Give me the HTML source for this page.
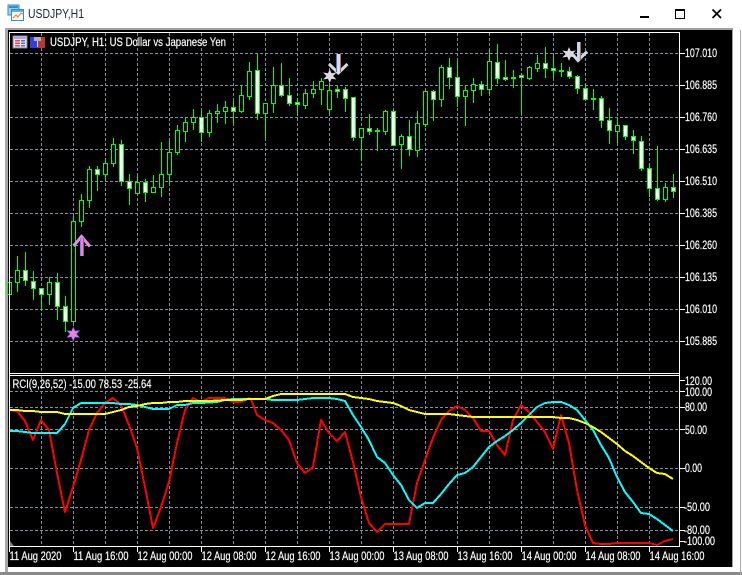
<!DOCTYPE html>
<html><head><meta charset="utf-8"><title>USDJPY,H1</title>
<style>
html,body{margin:0;padding:0;background:#fff;width:742px;height:575px;overflow:hidden}
svg{display:block;font-family:"Liberation Sans",sans-serif}
text{fill:#fff;font-size:11.5px;stroke:#fff;stroke-width:.18px}
</style></head><body>
<svg width="742" height="575" viewBox="0 0 742 575" xmlns="http://www.w3.org/2000/svg">
<rect width="742" height="575" fill="#fff"/>
<!-- title bar -->
<g shape-rendering="crispEdges">
<rect x="8" y="5" width="11" height="10" fill="#9fd0f0" stroke="#2b8fd8"/>
<rect x="9" y="6" width="9" height="2" fill="#2b8fd8"/>
<rect x="11.5" y="9.5" width="12" height="11" fill="#fff" stroke="#2b8fd8"/>
<rect x="12" y="10" width="11" height="2" fill="#58aee8"/>
</g>
<path d="M13 18l3-3 2 2 3-4 2 1" fill="none" stroke="#f08020" stroke-width="1.2"/>
<text x="28" y="18" textLength="56" lengthAdjust="spacingAndGlyphs" style="fill:#1c2438;stroke:none;font-size:13px">USDJPY,H1</text>
<g shape-rendering="crispEdges">
<rect x="640" y="16" width="9" height="2" fill="#000"/>
<rect x="675.5" y="9.5" width="9" height="9" fill="none" stroke="#000"/>
<rect x="675" y="9" width="10" height="2" fill="#000"/>
</g>
<path d="M712.5 9.5l8.5 8.5M721 9.5l-8.5 8.5" stroke="#000" stroke-width="1.7" fill="none"/>
<!-- frame -->
<g shape-rendering="crispEdges">
<rect x="5" y="28" width="728" height="2" fill="#a0a0a0"/>
<rect x="5" y="28" width="3" height="544" fill="#a8a8a8"/>
<rect x="732" y="28" width="1" height="539" fill="#a0a0a0"/>
<rect x="0" y="572" width="742" height="3" fill="#8a8a8a"/>
<rect x="740" y="30" width="1" height="545" fill="#a8a8a8"/>
<rect x="8" y="30" width="724" height="537" fill="#000"/>
</g>
<!-- grid -->
<g stroke="#8090a0" stroke-width="1" stroke-dasharray="3 2" fill="none" shape-rendering="crispEdges">
<path d="M10 53.5H679M10 85.5H679M10 117.5H679M10 149.5H679M10 181.5H679M10 213.5H679M10 245.5H679M10 277.5H679M10 309.5H679M10 341.5H679"/>
<path d="M10 391.5H679M10 407.5H679M10 429.5H679M10 468.5H679M10 507.5H679M10 530.5H679"/>
<path d="M41.5 33V373M73.5 33V373M105.5 33V373M137.5 33V373M169.5 33V373M201.5 33V373M233.5 33V373M265.5 33V373M297.5 33V373M329.5 33V373M361.5 33V373M393.5 33V373M425.5 33V373M457.5 33V373M489.5 33V373M521.5 33V373M553.5 33V373M585.5 33V373M617.5 33V373M649.5 33V373"/>
<path d="M41.5 376V546M73.5 376V546M105.5 376V546M137.5 376V546M169.5 376V546M201.5 376V546M233.5 376V546M265.5 376V546M297.5 376V546M329.5 376V546M361.5 376V546M393.5 376V546M425.5 376V546M457.5 376V546M489.5 376V546M521.5 376V546M553.5 376V546M585.5 376V546M617.5 376V546M649.5 376V546"/>
</g>
<!-- candles -->
<g shape-rendering="crispEdges" stroke="#00ff00" stroke-width="1">
<path fill="none" d="M9.5 278V300M17.5 256V292M25.5 252V286M33.5 271V300M41.5 288V310M49.5 277V305M57.5 273V320M65.5 296V332M73.5 216V323M81.5 194V227M89.5 166V208M97.5 166V191M105.5 158V180M113.5 138V167M121.5 140V186M129.5 174V205M137.5 176V194M145.5 179V202M153.5 175V193M161.5 142V197M169.5 140V184M177.5 125V155M185.5 117V142M193.5 109V130M201.5 111V142M209.5 110V137M217.5 104V123M225.5 101V124M233.5 101V124M241.5 85V113M249.5 62V100M257.5 53V120M265.5 103V139M273.5 67V113M281.5 63V97M289.5 78V106M297.5 98V115M305.5 89V109M313.5 81V98M321.5 78V105M329.5 85V113M337.5 86V98M345.5 87V112M353.5 97V141M361.5 128V161M369.5 114V135M377.5 128V151M385.5 110V135M393.5 110V145M401.5 134V169M409.5 120V156M417.5 111V157M425.5 91V127M433.5 90V121M441.5 65V107M449.5 58V89M457.5 61V107M465.5 85V126M473.5 78V103M481.5 81V96M489.5 50V94M497.5 44V84M505.5 60V81M513.5 70V88M521.5 74V114M529.5 66V80M537.5 55V72M545.5 47V78M553.5 56V78M561.5 63V77M569.5 67V79M577.5 75V94M585.5 84V101M593.5 89V110M601.5 96V128M609.5 108V144M617.5 118V143M625.5 125V140M633.5 130V154M641.5 136V171M649.5 164V197M657.5 146V201M665.5 183V202M673.5 174V198"/>
<path fill="#000" d="M7.5 282.5h4V294.5h-4zM15.5 270.5h4V282.5h-4zM47.5 282.5h4V294.5h-4zM71.5 221.5h4V321.5h-4zM79.5 200.5h4V221.5h-4zM87.5 169.5h4V200.5h-4zM103.5 163.5h4V174.5h-4zM111.5 144.5h4V163.5h-4zM135.5 182.5h4V193.5h-4zM151.5 187.5h4V192.5h-4zM159.5 174.5h4V187.5h-4zM167.5 152.5h4V174.5h-4zM175.5 130.5h4V152.5h-4zM183.5 122.5h4V131.5h-4zM191.5 117.5h4V122.5h-4zM207.5 113.5h4V132.5h-4zM215.5 111.5h4V113.5h-4zM223.5 107.5h4V111.5h-4zM239.5 95.5h4V111.5h-4zM247.5 71.5h4V96.5h-4zM263.5 103.5h4V113.5h-4zM271.5 85.5h4V103.5h-4zM303.5 93.5h4V105.5h-4zM311.5 89.5h4V93.5h-4zM319.5 81.5h4V89.5h-4zM327.5 90.5h4V109.5h-4zM359.5 128.5h4V137.5h-4zM383.5 111.5h4V131.5h-4zM399.5 136.5h4V144.5h-4zM415.5 123.5h4V150.5h-4zM423.5 91.5h4V124.5h-4zM439.5 67.5h4V99.5h-4zM463.5 90.5h4V96.5h-4zM471.5 84.5h4V90.5h-4zM487.5 61.5h4V89.5h-4zM527.5 67.5h4V78.5h-4zM535.5 63.5h4V68.5h-4zM615.5 125.5h4V131.5h-4zM663.5 187.5h4V199.5h-4z"/>
<path fill="#fff" d="M23.5 270.5h4V280.5h-4zM31.5 281.5h4V288.5h-4zM39.5 288.5h4V294.5h-4zM55.5 282.5h4V306.5h-4zM63.5 306.5h4V321.5h-4zM95.5 169.5h4V174.5h-4zM119.5 144.5h4V181.5h-4zM127.5 181.5h4V188.5h-4zM143.5 182.5h4V192.5h-4zM199.5 117.5h4V132.5h-4zM231.5 107.5h4V111.5h-4zM255.5 70.5h4V113.5h-4zM279.5 85.5h4V95.5h-4zM287.5 95.5h4V103.5h-4zM295.5 102.5h4V104.5h-4zM335.5 89.5h4V91.5h-4zM343.5 89.5h4V98.5h-4zM351.5 97.5h4V137.5h-4zM367.5 128.5h4V131.5h-4zM375.5 130.5h4V131.5h-4zM391.5 111.5h4V145.5h-4zM407.5 136.5h4V149.5h-4zM431.5 91.5h4V99.5h-4zM447.5 67.5h4V77.5h-4zM455.5 77.5h4V96.5h-4zM479.5 84.5h4V89.5h-4zM495.5 62.5h4V78.5h-4zM503.5 77.5h4V79.5h-4zM511.5 77.5h4V78.5h-4zM519.5 75.5h4V77.5h-4zM543.5 63.5h4V68.5h-4zM551.5 68.5h4V70.5h-4zM559.5 70.5h4V71.5h-4zM567.5 71.5h4V76.5h-4zM575.5 76.5h4V88.5h-4zM583.5 88.5h4V99.5h-4zM591.5 98.5h4V99.5h-4zM599.5 98.5h4V120.5h-4zM607.5 120.5h4V130.5h-4zM623.5 125.5h4V136.5h-4zM631.5 136.5h4V140.5h-4zM639.5 141.5h4V168.5h-4zM647.5 168.5h4V188.5h-4zM655.5 188.5h4V199.5h-4zM671.5 187.5h4V191.5h-4z"/>
</g>
<!-- arrows and stars -->
<polygon points="73.3,327 75,331 79.5,330.5 76.5,334 79.5,337.5 75,337 73.3,341 71.5,337 67,337.5 70,334 67,330.5 71.5,331" fill="#f080e0" stroke="#6050e0" stroke-width=".6"/>
<path d="M73.5 246L81.5 236.5 90 246.5" fill="none" stroke="#e88ae8" stroke-width="3"/>
<rect x="80" y="237" width="3" height="19" fill="#d888f8"/>
<rect x="83" y="238" width="1" height="18" fill="#a85a3a"/>
<rect x="80" y="238" width="1" height="18" fill="#9a6cff"/>
<polygon points="329.7,69 331.5,73.3 336.5,72.5 333,76 336.5,79.5 331.5,78.7 329.7,83 328,78.7 323,79.5 326.5,76 323,72.5 328,73.3" fill="#dcdce0"/>
<path d="M329 64L338.3 73 347.5 64" fill="none" stroke="#d8d8e4" stroke-width="3"/>
<rect x="337" y="54" width="3" height="19" fill="#dcdce8"/>
<rect x="340" y="54" width="1" height="18" fill="#b07040"/>
<rect x="336" y="54" width="1" height="18" fill="#5070d0"/>
<polygon points="569,47 570.8,51.3 575.8,50.5 572.3,54 575.8,57.5 570.8,56.7 569,61 567.3,56.7 562.3,57.5 565.8,54 562.3,50.5 567.3,51.3" fill="#dcdce0"/>
<path d="M570.5 52L578 60.5 587 51.5" fill="none" stroke="#d8d8e4" stroke-width="3"/>
<rect x="577" y="42" width="3" height="19" fill="#c8d4ec"/>
<rect x="580" y="42" width="1" height="18" fill="#a07050"/>
<!-- indicator lines -->
<g fill="none" stroke-width="2" stroke-linejoin="round" shape-rendering="crispEdges">
<polyline stroke="#ff0000" points="10,410 17,411 25,421 33,440 41,420 49,430 57,473 65,512 73,487 81,460 89,430 97,413 105,403 113,398 121,405 129,425 137,448 145,487 153,528 161,507 169,482 177,443 185,410 193,398 201,402 209,398 225,398 233,402 241,402 249,398 251,399 257,415 265,420 273,423 281,430 289,440 297,463 305,473 313,467 321,420 329,433 337,441 345,432 353,462 361,497 369,523 377,532 385,524 409,524 417,483 425,460 433,438 441,420 449,411 457,406 465,410 473,418 481,431 489,431 497,445 505,455 513,420 521,405 529,412 537,422 545,432 553,449 561,415 569,443 577,490 585,525 593,543 601,544 609,544 617,543 641,543 649,543 657,545 665,541 673,539"/>
<polyline stroke="#00ffff" points="10,431 17,431 25,432 33,433 57,433 65,424 73,408 81,403 113,403 121,404 129,404 137,405 145,407 153,409 169,409 177,405 185,405 193,403 201,403 217,402 225,400 233,399 265,399 273,400 297,400 305,399 313,398 329,398 337,399 345,401 353,415 361,427 369,440 377,457 385,463 393,475 401,485 409,500 417,508 425,503 433,503 441,494 449,484 457,475 465,473 473,467 481,457 489,447 497,441 505,436 513,430 521,423 529,415 537,407 545,403 553,402 561,402 569,405 577,410 585,420 593,430 601,445 609,458 617,477 625,492 633,502 641,513 649,514 657,519 665,525 673,531"/>
<polyline stroke="#ffff00" points="10,410 17,410 25,411 33,411 41,412 57,412 65,414 105,414 113,412 121,410 129,407 137,406 145,404 153,403 161,403 169,402 177,402 185,401 209,401 225,400 241,400 249,399 265,399 273,396 281,394 345,394 353,397 361,398 369,399 377,401 385,402 393,403 401,406 409,410 417,412 425,414 449,414 457,415 465,416 473,417 553,417 561,418 569,418 577,420 585,423 593,427 601,432 609,438 617,444 625,451 633,456 641,462 649,468 657,473 665,474 673,479"/>
</g>
<polygon points="10,541 14,546 10,546" fill="#708090"/>
<!-- borders, ticks -->
<g fill="#fff" shape-rendering="crispEdges">
<rect x="9" y="32" width="671" height="1"/>
<rect x="9" y="373" width="671" height="1"/>
<rect x="9" y="375" width="671" height="1"/>
<rect x="9" y="546" width="671" height="1"/>
<rect x="9" y="32" width="1" height="520"/>
<rect x="679" y="32" width="1" height="515"/>
<path d="M680 53h5v1h-5zM680 85h5v1h-5zM680 117h5v1h-5zM680 149h5v1h-5zM680 181h5v1h-5zM680 213h5v1h-5zM680 245h5v1h-5zM680 277h5v1h-5zM680 309h5v1h-5zM680 341h5v1h-5zM680 380h5v1h-5zM680 391h5v1h-5zM680 407h5v1h-5zM680 429h5v1h-5zM680 468h5v1h-5zM680 507h5v1h-5zM680 530h5v1h-5zM680 541h5v1h-5zM73 547h1v5h-1zM137 547h1v5h-1zM201 547h1v5h-1zM265 547h1v5h-1zM329 547h1v5h-1zM393 547h1v5h-1zM457 547h1v5h-1zM521 547h1v5h-1zM585 547h1v5h-1zM649 547h1v5h-1z"/>
</g>
<!-- chart icons -->
<g shape-rendering="crispEdges">
<rect x="13" y="36" width="14" height="12" fill="#e8e8f4" stroke="#808098" stroke-width="1"/>
<rect x="14" y="37" width="12" height="2" fill="#b0a0e0"/>
<rect x="15" y="40" width="5" height="1.5" fill="#e05050"/><rect x="21" y="40" width="4" height="1.5" fill="#5070d8"/>
<rect x="15" y="42.5" width="5" height="1.5" fill="#e05050"/><rect x="21" y="42.5" width="4" height="1.5" fill="#5070d8"/>
<rect x="15" y="45" width="5" height="1.5" fill="#e05050"/><rect x="21" y="45" width="4" height="1.5" fill="#5070d8"/>
<rect x="30" y="37" width="8" height="11" fill="#3040d8"/>
<rect x="38" y="37" width="7" height="11" fill="#b83838"/>
<rect x="34" y="37" width="7" height="4" fill="#b0b0b0"/>
<rect x="37" y="41" width="1" height="6" fill="#d8d8d8"/>
</g>
<!-- texts -->
<text x="50" y="46" textLength="176" lengthAdjust="spacingAndGlyphs">USDJPY, H1:  US Dollar vs Japanese Yen</text>
<text x="12.5" y="388" textLength="139" lengthAdjust="spacingAndGlyphs">RCI(9,26,52) -15.00 78.53 -25.64</text>
<text x="685" y="57" textLength="32" lengthAdjust="spacingAndGlyphs">107.010</text>
<text x="685" y="89" textLength="32" lengthAdjust="spacingAndGlyphs">106.885</text>
<text x="685" y="121" textLength="32" lengthAdjust="spacingAndGlyphs">106.760</text>
<text x="685" y="153" textLength="32" lengthAdjust="spacingAndGlyphs">106.635</text>
<text x="685" y="185" textLength="32" lengthAdjust="spacingAndGlyphs">106.510</text>
<text x="685" y="217" textLength="32" lengthAdjust="spacingAndGlyphs">106.385</text>
<text x="685" y="249" textLength="32" lengthAdjust="spacingAndGlyphs">106.260</text>
<text x="685" y="281" textLength="32" lengthAdjust="spacingAndGlyphs">106.135</text>
<text x="685" y="313" textLength="32" lengthAdjust="spacingAndGlyphs">106.010</text>
<text x="685" y="345" textLength="32" lengthAdjust="spacingAndGlyphs">105.885</text>
<text x="685" y="385" textLength="27" lengthAdjust="spacingAndGlyphs">120.00</text>
<text x="685" y="396" textLength="27" lengthAdjust="spacingAndGlyphs">100.00</text>
<text x="685" y="411" textLength="22" lengthAdjust="spacingAndGlyphs">80.00</text>
<text x="685" y="434" textLength="22" lengthAdjust="spacingAndGlyphs">50.00</text>
<text x="685" y="472" textLength="17" lengthAdjust="spacingAndGlyphs">0.00</text>
<text x="684" y="511" textLength="26" lengthAdjust="spacingAndGlyphs">-50.00</text>
<text x="684" y="534" textLength="26" lengthAdjust="spacingAndGlyphs">-80.00</text>
<text x="684" y="545" textLength="31" lengthAdjust="spacingAndGlyphs">-100.00</text>
<text x="9.5" y="560" textLength="52" lengthAdjust="spacingAndGlyphs">11 Aug 2020</text>
<text x="73.5" y="560" textLength="55" lengthAdjust="spacingAndGlyphs">11 Aug 16:00</text>
<text x="137.5" y="560" textLength="55" lengthAdjust="spacingAndGlyphs">12 Aug 00:00</text>
<text x="201.5" y="560" textLength="55" lengthAdjust="spacingAndGlyphs">12 Aug 08:00</text>
<text x="265.5" y="560" textLength="55" lengthAdjust="spacingAndGlyphs">12 Aug 16:00</text>
<text x="329.5" y="560" textLength="55" lengthAdjust="spacingAndGlyphs">13 Aug 00:00</text>
<text x="393.5" y="560" textLength="55" lengthAdjust="spacingAndGlyphs">13 Aug 08:00</text>
<text x="457.5" y="560" textLength="55" lengthAdjust="spacingAndGlyphs">13 Aug 16:00</text>
<text x="521.5" y="560" textLength="55" lengthAdjust="spacingAndGlyphs">14 Aug 00:00</text>
<text x="585.5" y="560" textLength="55" lengthAdjust="spacingAndGlyphs">14 Aug 08:00</text>
<text x="649.5" y="560" textLength="55" lengthAdjust="spacingAndGlyphs">14 Aug 16:00</text>
</svg>
</body></html>
